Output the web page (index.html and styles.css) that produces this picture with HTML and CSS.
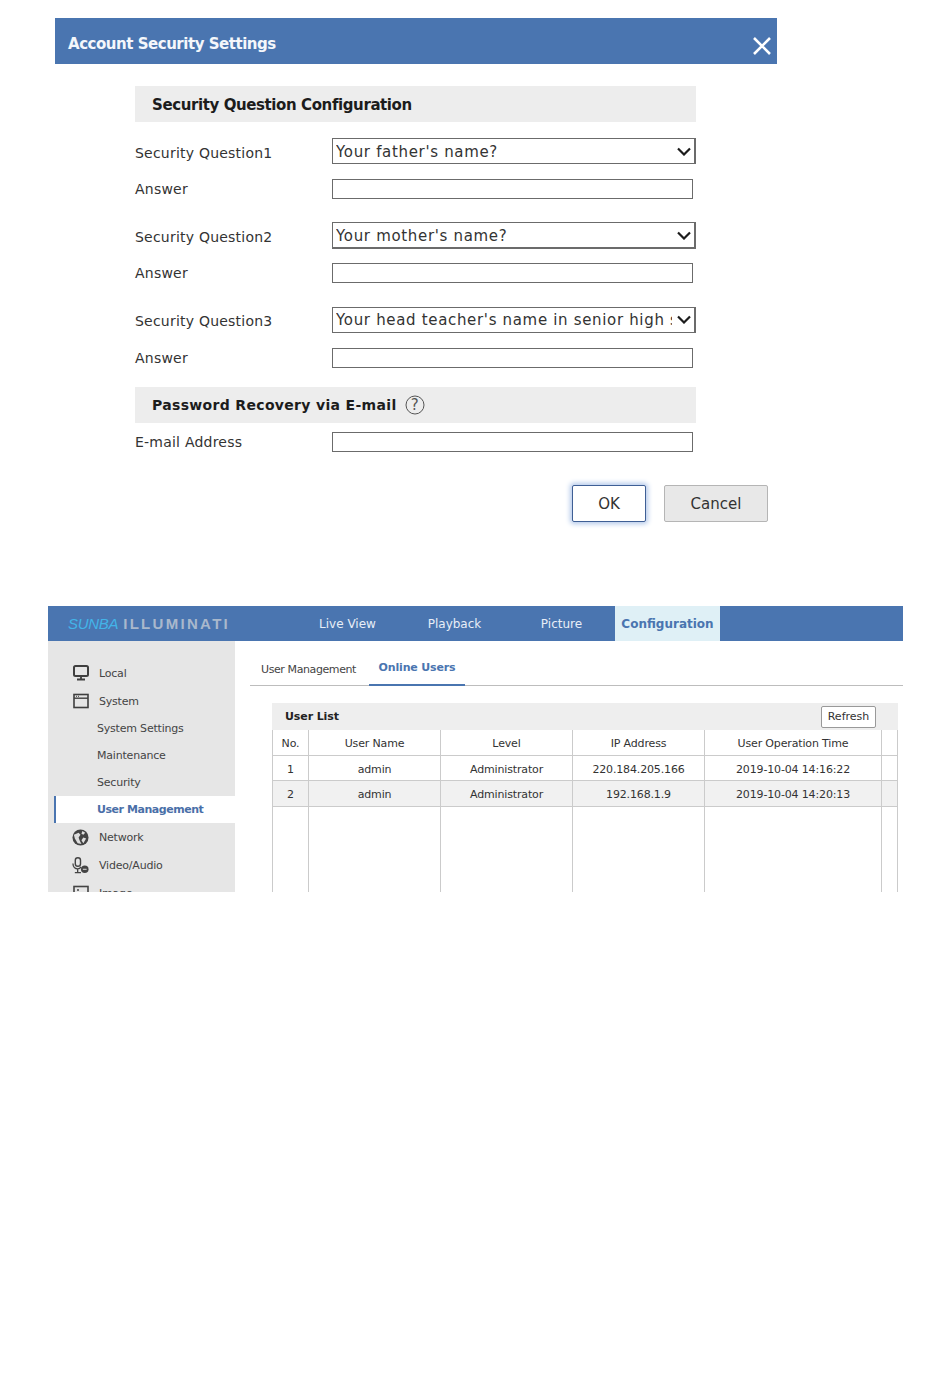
FILE: index.html
```html
<!DOCTYPE html>
<html lang="en">
<head>
<meta charset="utf-8">
<title>Account Security Settings</title>
<link rel="stylesheet" href="styles.css">
</head>
<body>
<section class="dialog">
  <header class="dialog-head">
    <h1>Account Security Settings</h1>
    <svg class="close" viewBox="0 0 20 20" width="20" height="20"><path d="M2 2 18 18M18 2 2 18" stroke="#fff" stroke-width="2.6" fill="none"/></svg>
  </header>
  <div class="dialog-body">
    <h2 class="bar">Security Question Configuration</h2>
    <div class="qa">
      <div class="row q"><span class="lbl">Security Question1</span>
        <div class="select"><span class="val">Your father's name?</span><svg class="chev" viewBox="0 0 14 9" width="14" height="9"><path d="M1 1.500 7 7.500 13 1.500" stroke="#1c1c1c" stroke-width="2.200" fill="none"/></svg></div></div>
      <div class="row a"><span class="lbl">Answer</span><div class="input"></div></div>
    </div>
    <div class="qa">
      <div class="row q"><span class="lbl">Security Question2</span>
        <div class="select tall"><span class="val">Your mother's name?</span><svg class="chev" viewBox="0 0 14 9" width="14" height="9"><path d="M1 1.500 7 7.500 13 1.500" stroke="#1c1c1c" stroke-width="2.200" fill="none"/></svg></div></div>
      <div class="row a"><span class="lbl">Answer</span><div class="input"></div></div>
    </div>
    <div class="qa">
      <div class="row q"><span class="lbl">Security Question3</span>
        <div class="select"><span class="val">Your head teacher's name in senior high school?</span><svg class="chev" viewBox="0 0 14 9" width="14" height="9"><path d="M1 1.500 7 7.500 13 1.500" stroke="#1c1c1c" stroke-width="2.200" fill="none"/></svg></div></div>
      <div class="row a"><span class="lbl">Answer</span><div class="input"></div></div>
    </div>
    <h2 class="bar bar-mail">Password Recovery via E-mail
      <svg class="help" viewBox="0 0 20 20" width="20" height="20"><circle cx="10" cy="10" r="9" stroke="#555" stroke-width="1" fill="none"/><text x="10" y="15" text-anchor="middle" class="help-q">?</text></svg>
    </h2>
    <div class="row mail"><span class="lbl">E-mail Address</span><div class="input"></div></div>
  </div>
  <div class="actions">
    <button class="btn ok">OK</button>
    <button class="btn cancel">Cancel</button>
  </div>
</section>

<section class="app">
  <nav class="topnav">
    <div class="logo"><i>SUNBA</i><b>ILLUMINATI</b></div>
    <a class="nav">Live View</a>
    <a class="nav">Playback</a>
    <a class="nav">Picture</a>
    <a class="nav cur">Configuration</a>
  </nav>
  <div class="main">
    <aside class="side">
      <div class="side-item top first">
        <svg viewBox="0 0 16 16" width="16" height="16"><rect x="1" y="1" width="14" height="10" rx="1.500" fill="none" stroke="#3f3f3f" stroke-width="2"/><path d="M8 11v3M4 14.500h8" stroke="#3f3f3f" stroke-width="1.800"/></svg>
        <span>Local</span></div>
      <div class="side-item top">
        <svg viewBox="0 0 16 16" width="16" height="16"><rect x="1" y="1.500" width="14" height="13" fill="none" stroke="#3f3f3f" stroke-width="1.600"/><path d="M1 5.200h14" stroke="#3f3f3f" stroke-width="1.400"/><path d="M3 3.300h1M5 3.300h1" stroke="#3f3f3f"/></svg>
        <span>System</span></div>
      <div class="side-item sub">System Settings</div>
      <div class="side-item sub">Maintenance</div>
      <div class="side-item sub">Security</div>
      <div class="side-item sub active">User Management</div>
      <div class="side-item top">
        <svg class="shift" viewBox="0 0 18 18" width="17" height="17"><circle cx="9" cy="9" r="8.500" fill="#444"/><path d="M2 6 7 4l2 2-2 3 1 3 2 4-4-1-3-5zM11 2l3 2-2 2-2-1zM12 9l3 1-3 5-2-3z" fill="#dedede"/></svg>
        <span>Network</span></div>
      <div class="side-item top">
        <svg class="shift" viewBox="0 0 18 18" width="17" height="17"><rect x="3.500" y="0.800" width="5.500" height="9" rx="2.700" fill="none" stroke="#444" stroke-width="1.500"/><path d="M1 7c0 3.500 2.500 5.500 5 5.500s3-1 3.500-2M6 12.500v3.500M3 16.500h6.500" fill="none" stroke="#444" stroke-width="1.400"/><circle cx="13.500" cy="13" r="4" fill="#444"/><path d="M11.500 13h4" stroke="#e6e6e6"/></svg>
        <span>Video/Audio</span></div>
      <div class="side-item top">
        <svg viewBox="0 0 16 16" width="16" height="16"><rect x="1" y="1.500" width="14" height="13" fill="none" stroke="#444" stroke-width="1.600"/><circle cx="5" cy="5" r="1" fill="#444"/><path d="M3 12 7 8l2 2 2-3 3 4" fill="none" stroke="#444"/></svg>
        <span>Image</span></div>
    </aside>
    <div class="content">
      <div class="tabs">
        <a class="tab">User Management</a>
        <a class="tab on">Online Users</a>
      </div>
      <div class="panel">
        <div class="panel-head"><strong>User List</strong><button class="refresh">Refresh</button></div>
        <table class="users">
          <colgroup><col class="c1"><col class="c2"><col class="c3"><col class="c4"><col class="c5"><col class="c6"></colgroup>
          <thead><tr><th>No.</th><th>User Name</th><th>Level</th><th>IP Address</th><th>User Operation Time</th><th></th></tr></thead>
          <tbody>
            <tr class="first-row"><td>1</td><td>admin</td><td>Administrator</td><td>220.184.205.166</td><td>2019-10-04 14:16:22</td><td></td></tr>
            <tr class="alt"><td>2</td><td>admin</td><td>Administrator</td><td>192.168.1.9</td><td>2019-10-04 14:20:13</td><td></td></tr>
            <tr class="fill"><td></td><td></td><td></td><td></td><td></td><td></td></tr>
          </tbody>
        </table>
      </div>
    </div>
  </div>
</section>
</body>
</html>
```
FILE: styles.css
```css
* { box-sizing: border-box; }
html, body { margin: 0; background: #fff; }
body {
  height: 1383px;
  overflow: hidden;
  font-family: "DejaVu Sans", "Liberation Sans", sans-serif;
  color: #2b2b2b;
}

/* ---------- dialog ---------- */
.dialog { width: 722px; margin: 18px 0 0 55px; }
.dialog-head {
  height: 46px;
  background: #4a75b0;
  display: flex;
  align-items: center;
  justify-content: space-between;
  padding: 0 5px 0 13px;
}
.dialog-head h1 { margin: 5px 0 0; font-size: 15px; font-weight: 700; color: #f4f7fb; letter-spacing: -0.47px; }
.close { margin-top: 9px; }
.dialog-body { width: 561px; margin: 22px 0 0 80px; }
.bar {
  margin: 0;
  height: 36px;
  background: #ededed;
  display: flex;
  align-items: center;
  gap: 8px;
  padding: 2px 0 0 17px;
  font-size: 15px;
  font-weight: 700;
  color: #1c1c1c;
  letter-spacing: -0.4px;
}
.qa { padding-top: 16px; height: 84.500px; }
.qa:first-of-type { height: 84px; }
.bar-mail { margin-top: 12px; font-size: 14px; letter-spacing: 0.33px; padding-top: 0; }
.row { display: grid; grid-template-columns: 197px 1fr; align-items: center; }
.lbl { font-size: 14px; letter-spacing: 0.22px; color: #333; }
.q .lbl { padding-top: 3px; }
.q { height: 26px; }
.a { height: 20px; margin-top: 15px; }
.mail { height: 20px; margin-top: 9px; }
.select {
  height: 26px;
  width: 364px;
  border: 1px solid #6b6b6b;
  border-right-width: 2px;
  display: flex;
  align-items: center;
  justify-content: space-between;
  padding: 0 3px;
  background: #fff;
}
.select.tall { height: 27px; border-bottom-width: 2px; align-self: start; }
.val {
  width: 336px;
  white-space: nowrap;
  overflow: hidden;
  font-size: 15px;
  letter-spacing: 0.67px;
  padding-top: 1px;
  color: #333;
}
.input { height: 20px; width: 361px; border: 1px solid #6b6b6b; background: #fff; }
.help { flex: none; }
.help-q { font-size: 15px; fill: #555; font-weight: 400; }
.actions { display: flex; justify-content: flex-end; gap: 18px; margin: 33px 9px 0 0; }
.btn {
  height: 37px;
  font: 400 15px "DejaVu Sans", sans-serif;
  color: #333;
  border-radius: 2px;
  padding: 0;
}
.ok { width: 74px; background: #fff; border: 1.500px solid #3f5f95; box-shadow: 0 0 5px 2px #b4c9ea; }
.cancel { width: 104px; background: #e8e8e8; border: 1px solid #b5b5b5; }

/* ---------- app ---------- */
.app { width: 855px; height: 286px; margin: 84px 0 0 48px; overflow: hidden; }
.topnav { height: 35px; background: #4a75b0; display: flex; align-items: stretch; }
.logo { width: 246px; padding-left: 20px; display: flex; align-items: center; gap: 5px; }
.logo i { color: #43b4e8; font-family: "Liberation Sans", sans-serif; font-size: 15px; letter-spacing: -0.3px; }
.logo b { color: #a9b8cc; font-family: "Liberation Sans", sans-serif; font-size: 15px; letter-spacing: 2.300px; }
.nav { width: 107px; display: flex; align-items: center; justify-content: center; color: #e8eef7; font-size: 12px; }
.nav.cur { width: 105px; background: #dff0f6; color: #4a75b0; font-weight: 700; }
.main { display: flex; align-items: flex-start; height: 251px; }
.side { width: 187px; height: 300px; background: #e6e6e6; padding-top: 18px; flex: none; }
.side-item { font-size: 11px; color: #444; display: flex; align-items: center; letter-spacing: -0.2px; }
.top { height: 28px; padding-left: 25px; gap: 10px; }
.top svg { flex: none; }
.top .shift { margin-left: -1px; }
.sub { height: 27px; padding-left: 49px; }
.active { margin-left: 6px; padding-left: 41px; background: #fff; border-left: 2px solid #4a75b0; color: #4a6fa8; font-weight: 700; height: 27px; letter-spacing: -0.45px; }
.content { flex: 1; padding-left: 15px; min-width: 0; }
.tabs { height: 45px; border-bottom: 1px solid #bdbdbd; display: flex; align-items: flex-end; }
.tab { font-size: 11px; color: #444; height: 33px; display: flex; align-items: center; padding: 2px 0 0 11px; width: 119px; letter-spacing: -0.4px; white-space: nowrap; }
.tab.on { width: 96px; padding: 0 0 2px; justify-content: center; color: #4a75b0; font-weight: 700; border-bottom: 2px solid #4a75b0; margin-bottom: -1px; height: 34px; letter-spacing: -0.15px; }
.panel { margin: 17px 5px 0 22px; }
.panel-head { height: 27px; background: #eee; display: flex; align-items: center; justify-content: space-between; padding: 0 22px 0 13px; }
.panel-head strong { font-size: 11px; color: #222; letter-spacing: -0.1px; }
.refresh { height: 22px; width: 55px; padding: 0; font: 400 11px "DejaVu Sans", sans-serif; color: #333; background: #fff; border: 1px solid #999; border-radius: 2px; }
.users { width: 625px; table-layout: fixed; border-collapse: collapse; font-size: 11px; color: #333; letter-spacing: -0.15px; }
.c1 { width: 36px; } .c2, .c3, .c4 { width: 132px; } .c5 { width: 177px; } .c6 { width: 16px; }
.users th, .users td { padding: 2px 0 0; text-align: center; font-weight: 400; border-left: 1px solid #cbcbcb; border-right: 1px solid #cbcbcb; border-bottom: 1px solid #cbcbcb; }
.users th { height: 25px; }
.users td { height: 25.500px; }
.users .first-row td { padding-top: 3px; }
.users .alt td { background: #f1f1f1; }
.users .fill td { height: 90px; border-bottom: 0; }
```
